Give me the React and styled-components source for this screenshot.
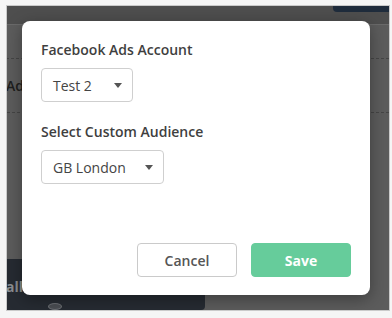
import styled, { createGlobalStyle } from 'styled-components'

const GlobalStyle = createGlobalStyle`
    html, body {
        margin: 0;
        padding: 0;
        background: #f5f5f5;
        font-family: "Open Sans", "Liberation Sans", sans-serif;
    }
`

const Page = styled.div`
    padding: 5px 0 0 6px;
`
const Screen = styled.div`
    position: relative;
    width: 382px;
    height: 304px;
    border: 1px solid #cacaca;
    display: flex;
    flex-direction: column;
    background: #5c5c5c;
    overflow: hidden;
`
const TopBar = styled.div`
    height: 18px;
    background: #4e4e4e;
    border-bottom: 1px solid #6a6a6a;
    display: flex;
    justify-content: flex-end;
    align-items: flex-start;
`
const NavTab = styled.div`
    width: 56px;
    height: 6px;
    background: #1f2c3c;
    border-bottom-left-radius: 4px;
`
const Body = styled.div`
    flex: 1;
    display: flex;
    flex-direction: column;
`
const Row = styled.div`
    height: ${p => p.h}px;
    border-top: ${p => (p.dashed ? '1px dashed #454545' : 'none')};
    display: flex;
    align-items: center;
    color: #1e1e1e;
    font-size: 14px;
    font-weight: 600;
    margin-left: ${p => p.shift || 0}px;
`
const BottomPanel = styled.div`
    margin-top: auto;
    width: 198px;
    height: 51px;
    background: #262b32;
    border-bottom-right-radius: 4px;
    display: flex;
    flex-direction: column;
    padding-left: 0;
`
const PanelText = styled.div`
    margin-top: 20px;
    margin-left: -1px;
    color: #8a8d91;
    font-size: 14px;
    font-weight: 700;
    line-height: 16px;
`
const Dot = styled.div`
    margin: 8px 0 0 41px;
    width: 12px;
    height: 12px;
    border-radius: 50%;
    background: #4a4d52;
    border: 1px solid #6d7075;
`

const Overlay = styled.div`
    position: absolute;
    inset: 0;
    padding: 15px 0 0 15px;
`
const Modal = styled.div`
    width: 348px;
    height: 274px;
    box-sizing: border-box;
    background: #fff;
    border-radius: 8px;
    box-shadow: 0 4px 16px rgba(0, 0, 0, 0.35);
    padding: 19px 19px 18px 19px;
    display: flex;
    flex-direction: column;
`
const Label = styled.div`
    font-size: 14px;
    line-height: 19px;
    font-weight: 600;
    color: #3f3f3f;
    margin-top: ${p => p.top || 0}px;
`
const Select = styled.div`
    margin-top: ${p => p.top}px;
    width: ${p => p.w}px;
    height: 34px;
    box-sizing: border-box;
    border: 1px solid #cfcfcf;
    border-radius: 4px;
    padding: 0 10px 0 11px;
    display: flex;
    align-items: center;
    justify-content: space-between;
    font-size: 14px;
    color: #444;
`
const Caret = styled.span`
    width: 0;
    height: 0;
    border-left: 4.5px solid transparent;
    border-right: 4.5px solid transparent;
    border-top: 5px solid #555;
`
const Footer = styled.div`
    margin-top: auto;
    display: flex;
    justify-content: flex-end;
    gap: 14px;
`
const Button = styled.button`
    width: 100px;
    height: 34px;
    box-sizing: border-box;
    border-radius: 4px;
    font-family: "Open Sans", "Liberation Sans", sans-serif;
    font-size: 14px;
    font-weight: ${p => (p.primary ? 700 : 600)};
    color: ${p => (p.primary ? '#fff' : '#555')};
    background: ${p => (p.primary ? '#66cc9b' : '#fff')};
    border: 1px solid ${p => (p.primary ? '#66cc9b' : '#cacaca')};
    cursor: pointer;
`

const App = () => {
  return (
    <Page>
      <GlobalStyle />
      <Screen>
        <TopBar>
          <NavTab />
        </TopBar>
        <Body>
          <Row h={33} />
          <Row h={53} dashed shift={-1}>Ads</Row>
          <Row h={1} dashed />
          <BottomPanel>
            <PanelText>all</PanelText>
            <Dot />
          </BottomPanel>
        </Body>
        <Overlay>
          <Modal>
            <Label>Facebook Ads Account</Label>
            <Select top={9} w={92}>
              <span>Test 2</span>
              <Caret />
            </Select>
            <Label top={20}>Select Custom Audience</Label>
            <Select top={9} w={123}>
              <span>GB London</span>
              <Caret />
            </Select>
            <Footer>
              <Button>Cancel</Button>
              <Button primary>Save</Button>
            </Footer>
          </Modal>
        </Overlay>
      </Screen>
    </Page>
  )
}

export default App
